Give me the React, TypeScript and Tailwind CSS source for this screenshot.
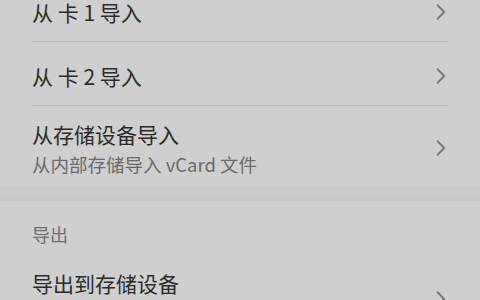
import type { ReactNode } from 'react'

function Chevron({ className = '' }: { className?: string }) {
  return (
    <svg width="10" height="16" viewBox="0 0 10 16" className={`shrink-0 ${className}`} aria-hidden>
      <path d="M1.5 1.2 L8.2 8 L1.5 14.8" fill="none" stroke="#747474" strokeWidth="1.8" strokeLinecap="round" strokeLinejoin="round" />
    </svg>
  )
}

function Row({ title, subtitle, divider = true, className = '' }: { title: ReactNode; subtitle?: string; divider?: boolean; className?: string }) {
  return (
    <div className="px-8">
      <div className={`flex items-center justify-between pr-[2px] ${divider ? 'border-b border-[#bdbdbd]' : ''} ${className}`}>
        <div className="flex flex-col">
          <span className="text-[21px] leading-[28px] text-[#2b2b2b]">{title}</span>
          {subtitle && <span className="mt-[4px] text-[18.5px] leading-[24px] text-[#6a6a6a]">{subtitle}</span>}
        </div>
        <Chevron />
      </div>
    </div>
  )
}

export default function App() {
  return (
    <div
      className="h-[300px] w-[480px] overflow-hidden bg-[#cfcfcf]"
      style={{ fontFamily: '"Noto Sans CJK SC", "Noto Sans", sans-serif' }}
    >
      <div className="-mt-[22px]">
        <Row title="从 卡 1 导入" className="h-[64px] pt-[4px]" />
        <Row title="从 卡 2 导入" className="h-[64px] pt-[4px]" />
        <Row title="从存储设备导入" subtitle="从内部存储导入 vCard 文件" divider={false} className="h-[80px] pt-[4px]" />
        <div className="h-[15px] bg-gradient-to-b from-[#cbcbcb] to-[#c7c7c7]" />
        <div className="h-[56px] px-8 pt-[21px]">
          <span className="text-[18px] leading-[24px] text-[#6e6e6e]">导出</span>
        </div>
        <div className="px-8">
          <div className="flex items-start justify-between pr-[2px] pt-[12px]">
            <span className="text-[21px] leading-[28px] text-[#2b2b2b]">导出到存储设备</span>
            <Chevron className="mt-[22px]" />
          </div>
        </div>
      </div>
    </div>
  )
}
